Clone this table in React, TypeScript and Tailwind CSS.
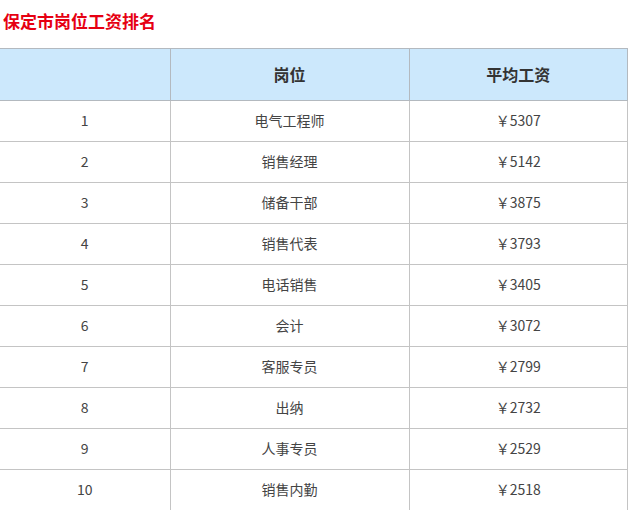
const rows = [
  { rank: 1, title: '电气工程师', salary: 5307 },
  { rank: 2, title: '销售经理', salary: 5142 },
  { rank: 3, title: '储备干部', salary: 3875 },
  { rank: 4, title: '销售代表', salary: 3793 },
  { rank: 5, title: '电话销售', salary: 3405 },
  { rank: 6, title: '会计', salary: 3072 },
  { rank: 7, title: '客服专员', salary: 2799 },
  { rank: 8, title: '出纳', salary: 2732 },
  { rank: 9, title: '人事专员', salary: 2529 },
  { rank: 10, title: '销售内勤', salary: 2518 },
]

export default function App() {
  return (
    <div
      className="w-[630px] h-[510px] overflow-hidden bg-white"
      style={{ fontFamily: '"Microsoft YaHei", "Noto Sans CJK SC", sans-serif' }}
    >
      <h2 className="h-[48px] pl-[3px] pt-[8px] text-[17px] leading-[26px] font-bold text-[#e60012]">
        保定市岗位工资排名
      </h2>
      <table className="w-[628px] border-collapse table-fixed text-[#444]">
        <colgroup>
          <col className="w-[170px]" />
          <col className="w-[239px]" />
          <col />
        </colgroup>
        <thead>
          <tr className="h-[52px] bg-[#cce8fc]">
            <th className="border border-[#b3b9bf] border-l-0 font-bold text-[16px]"></th>
            <th className="border border-[#b3b9bf] font-bold text-[16px] text-[#333] pb-[2px]">岗位</th>
            <th className="border border-[#b3b9bf] font-bold text-[16px] text-[#333] pb-[2px]">平均工资</th>
          </tr>
        </thead>
        <tbody>
          {rows.map((r) => (
            <tr key={r.rank} className="h-[41px] text-[14px]">
              <td className="border border-[#c4c4c4] border-l-0 text-center pb-[2px]">{r.rank}</td>
              <td className="border border-[#c4c4c4] text-center pb-[2px]">{r.title}</td>
              <td className="border border-[#c4c4c4] text-center pb-[2px]">￥{r.salary}</td>
            </tr>
          ))}
        </tbody>
      </table>
    </div>
  )
}
